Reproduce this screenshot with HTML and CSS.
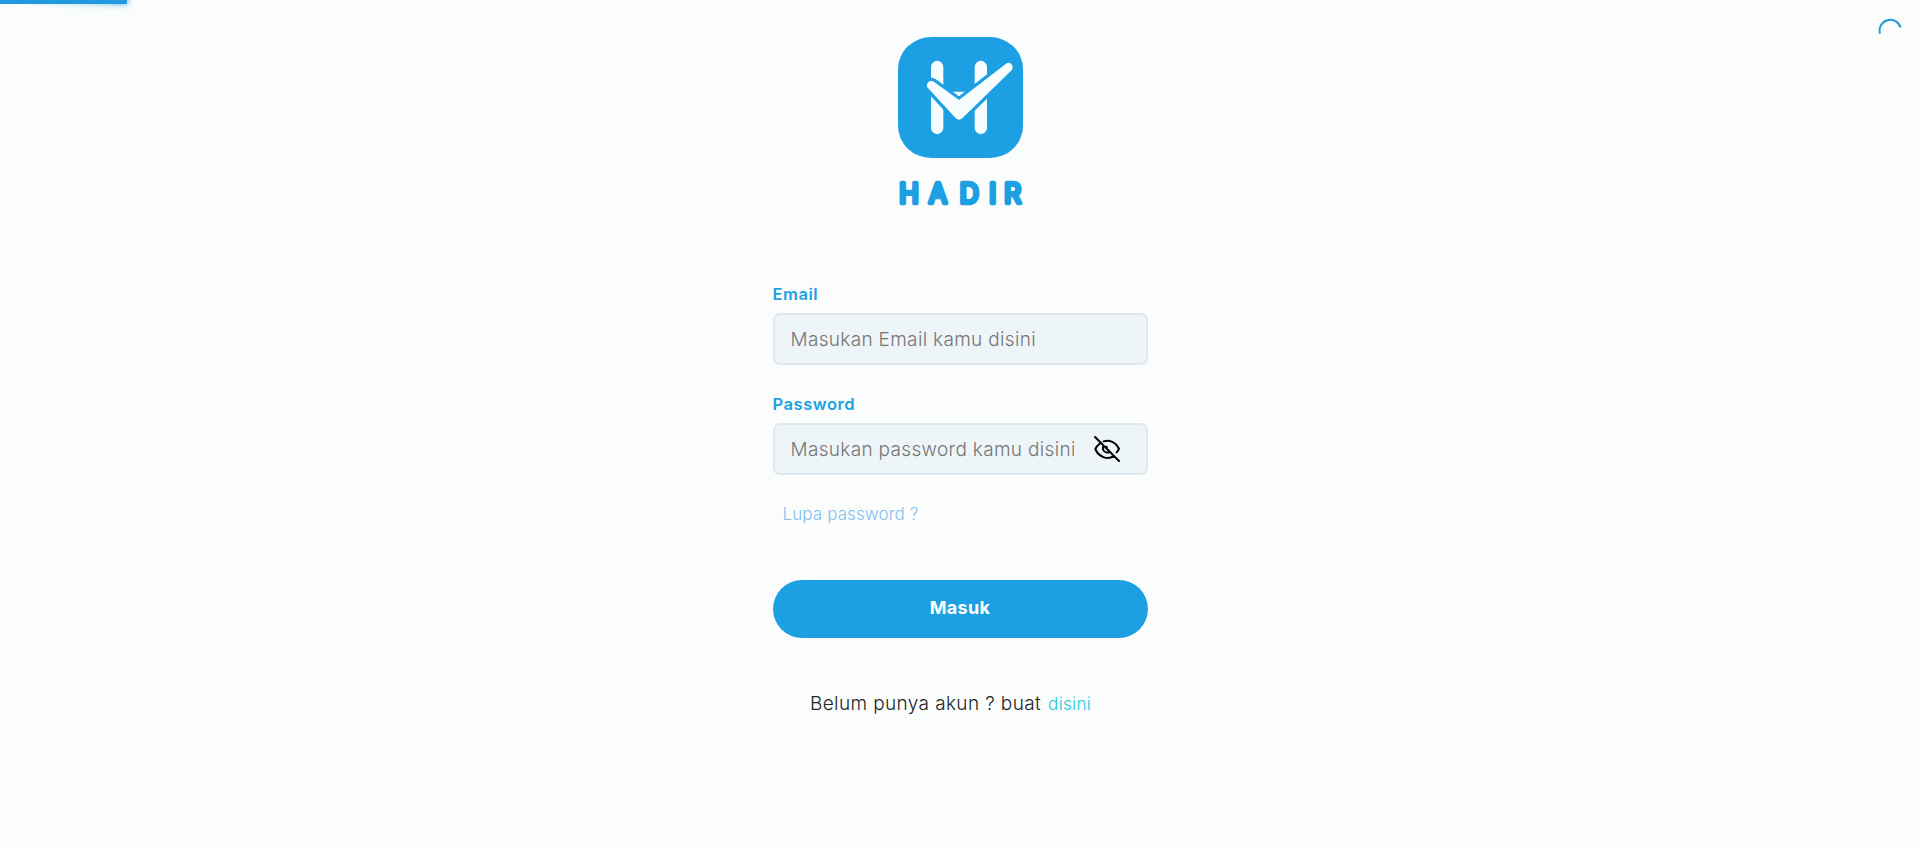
FILE: index.html
```html
<!DOCTYPE html>
<html lang="id">
<head>
<meta charset="utf-8">
<title>Hadir</title>
<link rel="stylesheet" href="styles.css">
</head>
<body>
<div class="progress"><div class="progress-peg"></div></div>
<svg class="spinner" viewBox="0 0 24 24"><path d="M2 15.500A10.400 10.400 0 0 1 22.600 9.500"/></svg>
<main class="login">
  <svg class="logo" viewBox="0 0 480 600" role="img" aria-label="Hadir">
    <rect class="logo-tile" x="54" y="51" width="375" height="363" rx="100" ry="96"/>
    <path class="logo-stem" d="M171.500 141V324M302.500 141V324"/>
    <path class="logo-fill" d="M214 215H260L238 233Z"/>
    <path class="logo-gap" d="M154 196L237 286L385 142L237 258Z"/>
    <path class="logo-check" d="M154 196L237 286L385 142L237 256Z"/>
    <text class="logo-name" y="549" x="58 147 239 328 373">HADIR</text>
  </svg>
  <form class="form">
    <label class="label" for="email">Email</label>
    <div class="field"><input class="input" id="email" type="text" placeholder="Masukan Email kamu disini"></div>
    <label class="label" for="password">Password</label>
    <div class="field">
      <input class="input input-password" id="password" type="password" placeholder="Masukan password kamu disini">
      <svg class="eye" viewBox="0 0 78 78"><path d="M3 3L75 75M29 16C44 11 63 16 75 38Q73 44 68 49M17 23Q8 30 4 39C15 66 44 72 59 59M28 30C23 44 34 53 47 48M38 32V38"/></svg>
    </div>
    <a class="forgot">Lupa password ?</a>
    <button class="submit" type="button">Masuk</button>
  </form>
  <p class="register"><span class="question">Belum punya akun ? buat</span><a class="create">disini</a></p>
</main>
</body>
</html>
```
FILE: styles.css
```css
* { box-sizing: border-box; }
body {
  margin: 0;
  height: 847px;
  overflow: hidden;
  background: #fbfdfc;
  font-family: "Inter", "Liberation Sans", sans-serif;
}
.progress {
  position: absolute;
  top: 0;
  left: 0;
  width: 127px;
  height: 4px;
  background: #2299e0;
}
.progress-peg {
  margin-left: auto;
  width: 100px;
  height: 100%;
  box-shadow: 0 0 10px #2299dd, 0 0 5px #2299dd;
  transform: rotate(3deg) translateY(-4px);
}
.spinner {
  position: absolute;
  top: 18px;
  left: 1878px;
  width: 24px;
  height: 24px;
  fill: none;
  stroke: #2299dd;
  stroke-width: 2;
}
.login {
  display: flex;
  flex-direction: column;
  align-items: center;
  padding-top: 20px;
}
.logo { width: 160px; height: 200px; }
.logo-tile { fill: #1da0e3; }
.logo-stem { fill: none; stroke: #f7fcff; stroke-width: 37; stroke-linecap: round; }
.logo-fill, .logo-check { fill: #f7fcff; }
.logo-check { stroke: #f7fcff; stroke-width: 26; stroke-linejoin: round; }
.logo-gap { fill: #1da0e3; stroke: #1da0e3; stroke-width: 46; stroke-linejoin: round; }
.logo-name {
  font-size: 79px;
  font-weight: 300;
  fill: #1da0e3;
  stroke: #1da0e3;
  stroke-width: 14;
  stroke-linejoin: round;
}
.form {
  display: flex;
  flex-direction: column;
  width: 375px;
  padding-top: 63px;
}
.label {
  height: 30px;
  line-height: 22px;
  font-size: 16.500px;
  font-weight: 600;
  letter-spacing: 0.550px;
  color: #1da0e3;
}
.field {
  display: flex;
  align-items: center;
  height: 52px;
  margin-bottom: 28px;
  padding-left: 16px;
  border: 2px solid #dfe7f0;
  border-radius: 7px;
  background: #eef5f9;
}
.input {
  width: 320px;
  padding: 0;
  border: 0;
  outline: 0;
  background: transparent;
  font: 300 19px "Inter", sans-serif;
  letter-spacing: 0.320px;
}
.input::placeholder { color: #757575; opacity: 1; }
.input-password { width: 283px; }
.eye {
  width: 26px;
  height: 26px;
  margin-left: 20px;
  fill: none;
  stroke: #000;
  stroke-width: 6;
  stroke-linecap: round;
}
.forgot {
  margin-left: 10px;
  height: 24px;
  line-height: 22px;
  font-size: 17px;
  font-weight: 300;
  letter-spacing: 0.100px;
  color: #82bfef;
}
.submit {
  height: 58px;
  margin-top: 53px;
  padding: 0 0 3px;
  border: 0;
  border-radius: 29px;
  background: #1da0e3;
  color: #fff;
  font: 700 18px "Inter", sans-serif;
  letter-spacing: 0.350px;
}
.register {
  display: flex;
  align-items: baseline;
  gap: 7px;
  width: 300px;
  margin: 52px 0 0;
  line-height: 28px;
  white-space: nowrap;
}
.question { font-size: 19px; font-weight: 300; letter-spacing: 0.380px; color: #212529; }
.create { font-size: 17px; font-weight: 300; letter-spacing: 0.350px; color: #1cc5dc; }
```
